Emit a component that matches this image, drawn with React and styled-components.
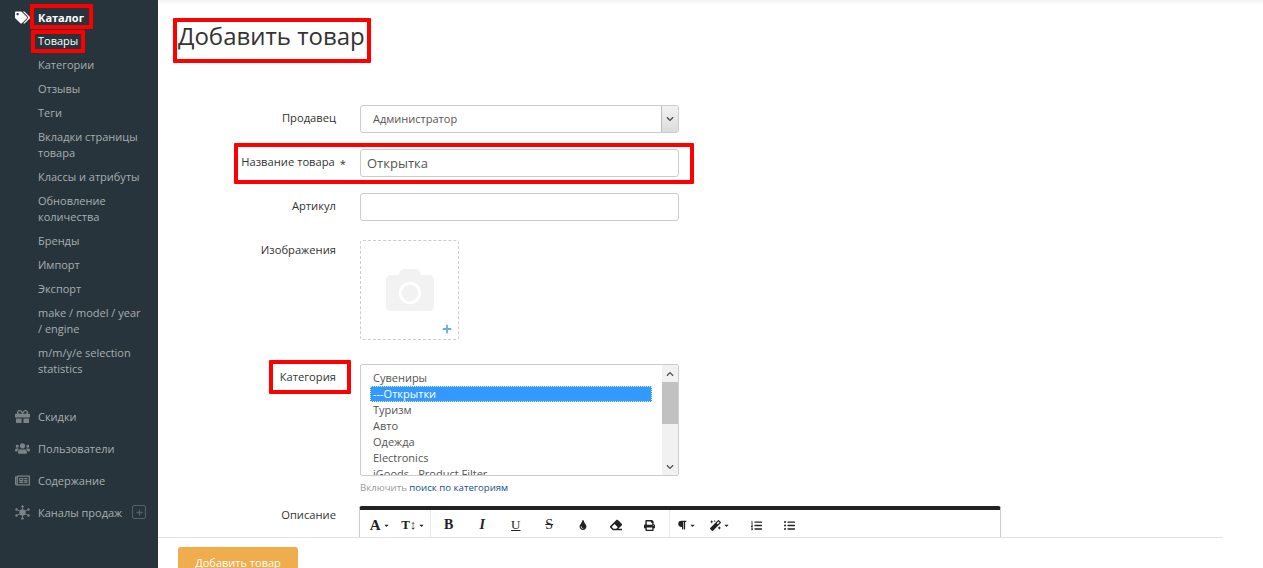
import React from 'react';
import styled, { createGlobalStyle } from 'styled-components';
import {
  FaTags,
  FaGift,
  FaUsers,
  FaRegNewspaper,
  FaCamera,
  FaPlus,
  FaChevronDown,
  FaChevronUp,
  FaCaretDown,
  FaTint,
  FaEraser,
  FaPrint,
  FaParagraph,
  FaMagic,
  FaListOl,
  FaListUl,
} from 'react-icons/fa';

const GlobalStyle = createGlobalStyle`
  html, body {
    margin: 0;
    height: 100%;
    overflow: hidden;
    background: #fff;
    font-family: "Open Sans", "Noto Sans", sans-serif;
  }
  #root {
    height: 100%;
  }
`;

const Page = styled.div`
  display: flex;
  height: 100vh;
`;

const Sidebar = styled.nav`
  width: 158px;
  flex-shrink: 0;
  background: #27343b;
  padding-top: 5px;
  box-sizing: border-box;
  overflow: hidden;
`;

const Framed = styled.div`
  position: relative;
`;

const RedFrame = styled.span`
  position: absolute;
  top: ${(p) => p.$top}px;
  left: ${(p) => p.$left}px;
  width: ${(p) => p.$width}px;
  height: ${(p) => p.$height}px;
  box-sizing: border-box;
  border: 4px solid #f00;
  border-radius: 1px;
  pointer-events: none;
`;

const SectionRow = styled.div`
  display: flex;
  align-items: center;
  height: 24px;
  padding-left: 15px;
  font-size: 11px;
  font-weight: 700;
  color: #fff;
`;

const SectionIcon = styled.span`
  width: 23px;
  display: flex;
  align-items: center;
  font-size: 15px;
  color: ${(p) => p.$color || '#7b8388'};
`;

const SubList = styled.ul`
  list-style: none;
  margin: 0;
  padding: 0 0 19px;
`;

const SubItem = styled.li`
  padding: 4px 15px 4px 38px;
  font-size: 11px;
  line-height: 16px;
  color: ${(p) => (p.$active ? '#fff' : '#a7aeb2')};
`;

const NavRow = styled.div`
  display: flex;
  align-items: center;
  height: 32px;
  padding-left: 15px;
  font-size: 11px;
  color: #a7aeb2;
`;

const PlusBox = styled.span`
  display: flex;
  align-items: center;
  justify-content: center;
  width: 12px;
  height: 12px;
  margin-left: 10px;
  border: 1px solid #566167;
  border-radius: 2px;
  color: #566167;
  font-size: 7px;
`;

const Main = styled.main`
  flex: 1;
  min-width: 0;
  display: flex;
  flex-direction: column;
  height: 100vh;
`;

const Scroll = styled.div`
  flex: 1;
  min-height: 0;
  overflow: hidden;
  background: linear-gradient(#f3f3f3, #fff 5px);
  padding: 18px 0 0 15px;
`;

const TitleBox = styled.div`
  display: inline-block;
  box-sizing: border-box;
  height: 45px;
  border: 4px solid #f00;
  border-radius: 1px;
  padding: 0 2px 0 1px;
`;

const Title = styled.h1`
  margin: 0;
  font-size: 24px;
  font-weight: 400;
  line-height: 28px;
  color: #333;
`;

const Form = styled.form`
  margin-top: 42px;
  margin-left: -15px;
`;

const Row = styled.div`
  position: relative;
  display: flex;
  margin-bottom: ${(p) => p.$gap ?? 16}px;
`;

const Label = styled.label`
  width: 178px;
  margin-right: 24px;
  padding-top: ${(p) => p.$top ?? 5}px;
  box-sizing: border-box;
  text-align: right;
  font-size: 11.2px;
  line-height: 16px;
  color: #333;
  flex-shrink: 0;
`;

const Required = styled.span`
  margin-right: -10px;
  margin-left: 5px;
  vertical-align: -2px;
`;

const Field = styled.div`
  width: 319px;
  height: 28px;
  box-sizing: border-box;
  border: 1px solid #ccc;
  border-radius: 3px;
  background: #fff;
  display: flex;
  align-items: center;
  color: #555;
`;

const InputText = styled.span`
  padding-left: 6px;
  font-size: 13px;
`;

const SelectText = styled.span`
  flex: 1;
  padding: 0 0 1px 12px;
  font-size: 11px;
`;

const SelectArrow = styled.span`
  width: 17px;
  height: 100%;
  box-sizing: border-box;
  display: flex;
  align-items: center;
  justify-content: center;
  background: linear-gradient(#f2f2f2, #dcdcdc);
  border-left: 1px solid #bbb;
  border-radius: 0 2px 2px 0;
  color: #444;
  font-size: 8px;
`;

const Dropzone = styled.div`
  position: relative;
  width: 99px;
  height: 100px;
  box-sizing: border-box;
  border: 1px dashed #ccc;
  border-radius: 3px;
  display: flex;
  align-items: center;
  justify-content: center;
  color: #f2f2f2;
  font-size: 48px;
`;

const DropPlus = styled.span`
  position: absolute;
  right: 6px;
  bottom: 5px;
  display: flex;
  font-size: 10px;
  color: #6db1d1;
`;

const ListBox = styled.div`
  width: 319px;
  height: 112px;
  box-sizing: border-box;
  border: 1px solid #ccc;
  border-radius: 2px;
  display: flex;
  overflow: hidden;
`;

const Options = styled.div`
  flex: 1;
  min-width: 0;
  padding: 5px 10px 0 9px;
  overflow: hidden;
`;

const Option = styled.div`
  height: 16px;
  line-height: 16px;
  padding-left: 3px;
  font-size: 11px;
  white-space: nowrap;
  color: ${(p) => (p.$selected ? '#fff' : '#555')};
  background: ${(p) => (p.$selected ? '#3399ff' : 'transparent')};
  outline: ${(p) => (p.$selected ? '1px dotted #dceaf8' : 'none')};
  outline-offset: -1px;
`;

const ScrollTrack = styled.div`
  width: 16px;
  background: #f1f1f1;
  display: flex;
  flex-direction: column;
  align-items: center;
  color: #505050;
  font-size: 8px;
`;

const ScrollArrow = styled.span`
  height: 17px;
  display: flex;
  align-items: center;
  justify-content: center;
  flex-shrink: 0;
`;

const ScrollThumb = styled.span`
  width: 100%;
  height: 42px;
  background: #c1c1c1;
  flex-shrink: 0;
`;

const ScrollRest = styled.span`
  flex: 1;
`;

const Help = styled.div`
  margin-top: 4px;
  font-size: 9.65px;
  line-height: 15px;
  color: #999;
`;

const HelpLink = styled.a`
  color: #14508c;
`;

const Editor = styled.div`
  width: 642px;
  margin-left: -1px;
  box-sizing: border-box;
  border: 1px solid #ccc;
  border-top: 4px solid #222;
  border-radius: 3px 3px 0 0;
`;

const Toolbar = styled.div`
  display: flex;
  height: 30px;
  padding-left: 3px;
  color: #222;
`;

const ToolGroup = styled.div`
  display: flex;
  align-items: center;
  height: 30px;
  padding: 0 ${(p) => p.$padRight ?? 0}px 0 ${(p) => p.$padLeft ?? 0}px;
  border-right: ${(p) => (p.$last ? 'none' : '1px solid #e8e8e8')};
`;

const Tool = styled.span`
  width: 33.5px;
  margin-left: ${(p) => p.$shift ?? 0}px;
  display: flex;
  align-items: center;
  justify-content: center;
  font-family: "Liberation Serif", serif;
  font-size: ${(p) => p.$size || 13}px;
  font-weight: ${(p) => (p.$light ? 400 : 700)};
  font-style: ${(p) => (p.$italic ? 'italic' : 'normal')};
  text-decoration: ${(p) => p.$line || 'none'};
`;

const Caret = styled.span`
  display: flex;
  margin-left: 2px;
  font-size: 7px;
`;

const Footer = styled.footer`
  height: 31px;
  flex-shrink: 0;
  box-sizing: border-box;
  margin-right: 40px;
  border-top: 1px solid #e2e2e2;
  padding: 9px 0 0 20px;
  overflow: hidden;
`;

const SaveButton = styled.button`
  width: 120px;
  height: 32px;
  border: 0;
  border-radius: 3px;
  background: #f0ad4e;
  color: #fff;
  font-family: inherit;
  font-size: 11px;
  padding: 0 0 2px;
`;

const ChannelIcon = () => (
  <svg width="15" height="15" viewBox="0 0 15 15" fill="currentColor" stroke="currentColor">
    <circle cx="7.5" cy="7.5" r="3.2" stroke="none" />
    <path d="M7.5 1.5v12M1.5 4.5l12 6M1.5 10.5l12-6" strokeWidth="0.8" />
    <circle cx="7.5" cy="1.5" r="1.2" stroke="none" />
    <circle cx="7.5" cy="13.5" r="1.2" stroke="none" />
    <circle cx="1.5" cy="4.5" r="1.2" stroke="none" />
    <circle cx="13.5" cy="4.5" r="1.2" stroke="none" />
    <circle cx="1.5" cy="10.5" r="1.2" stroke="none" />
    <circle cx="13.5" cy="10.5" r="1.2" stroke="none" />
  </svg>
);

const subItems = [
  'Категории',
  'Отзывы',
  'Теги',
  'Вкладки страницы товара',
  'Классы и атрибуты',
  'Обновление количества',
  'Бренды',
  'Импорт',
  'Экспорт',
  'make / model / year / engine',
  'm/m/y/e selection statistics',
];

const categories = ['Сувениры', '---Открытки', 'Туризм', 'Авто', 'Одежда', 'Electronics', 'iGoods - Product Filter'];

const App = () => {
  return (
    <Page>
      <GlobalStyle />
      <Sidebar>
        <Framed>
          <RedFrame $top={-1} $left={30} $width={63} $height={25} />
          <SectionRow>
            <SectionIcon $color="#fff"><FaTags /></SectionIcon>
            Каталог
          </SectionRow>
        </Framed>
        <SubList>
          <Framed>
            <RedFrame $top={1} $left={31} $width={54} $height={23} />
            <SubItem $active>Товары</SubItem>
          </Framed>
          {subItems.map((item) => (
            <SubItem key={item}>{item}</SubItem>
          ))}
        </SubList>
        <NavRow><SectionIcon><FaGift /></SectionIcon>Скидки</NavRow>
        <NavRow><SectionIcon><FaUsers /></SectionIcon>Пользователи</NavRow>
        <NavRow><SectionIcon><FaRegNewspaper /></SectionIcon>Содержание</NavRow>
        <NavRow>
          <SectionIcon><ChannelIcon /></SectionIcon>
          Каналы продаж
          <PlusBox><FaPlus /></PlusBox>
        </NavRow>
      </Sidebar>
      <Main>
        <Scroll>
          <TitleBox>
            <Title>Добавить товар</Title>
          </TitleBox>
          <Form>
            <Row>
              <Label>Продавец</Label>
              <Field>
                <SelectText>Администратор</SelectText>
                <SelectArrow><FaChevronDown /></SelectArrow>
              </Field>
            </Row>
            <Row>
              <RedFrame $top={-6} $left={76} $width={460} $height={41} />
              <Label>Название товара<Required>*</Required></Label>
              <Field><InputText>Открытка</InputText></Field>
            </Row>
            <Row $gap={19}>
              <Label>Артикул</Label>
              <Field />
            </Row>
            <Row $gap={24}>
              <Label $top={2}>Изображения</Label>
              <Dropzone>
                <FaCamera />
                <DropPlus><FaPlus /></DropPlus>
              </Dropzone>
            </Row>
            <Row $gap={11}>
              <RedFrame $top={-4} $left={111} $width={82} $height={34} />
              <Label>Категория</Label>
              <div>
                <ListBox>
                  <Options>
                    {categories.map((c, i) => (
                      <Option key={c} $selected={i === 1}>{c}</Option>
                    ))}
                  </Options>
                  <ScrollTrack>
                    <ScrollArrow><FaChevronUp /></ScrollArrow>
                    <ScrollThumb />
                    <ScrollRest />
                    <ScrollArrow><FaChevronDown /></ScrollArrow>
                  </ScrollTrack>
                </ListBox>
                <Help>Включить <HelpLink>поиск по категориям</HelpLink></Help>
              </div>
            </Row>
            <Row>
              <Label $top={1}>Описание</Label>
              <Editor>
                <Toolbar>
                  <ToolGroup>
                    <Tool $size={15}>A<Caret><FaCaretDown /></Caret></Tool>
                    <Tool $size={13}>T↕<Caret><FaCaretDown /></Caret></Tool>
                  </ToolGroup>
                  <ToolGroup $padLeft={1} $padRight={2}>
                    <Tool $size={14}>B</Tool>
                    <Tool $size={14} $italic>I</Tool>
                    <Tool $size={13} $light $line="underline">U</Tool>
                    <Tool $size={14} $light $line="line-through">S</Tool>
                    <Tool $size={10}><FaTint /></Tool>
                    <Tool $size={12}><FaEraser /></Tool>
                    <Tool $size={11}><FaPrint /></Tool>
                  </ToolGroup>
                  <ToolGroup $last>
                    <Tool $size={10}><FaParagraph /><Caret><FaCaretDown /></Caret></Tool>
                    <Tool $size={11}><FaMagic /><Caret><FaCaretDown /></Caret></Tool>
                    <Tool $size={11} $shift={3}><FaListOl /></Tool>
                    <Tool $size={11}><FaListUl /></Tool>
                  </ToolGroup>
                </Toolbar>
              </Editor>
            </Row>
          </Form>
        </Scroll>
        <Footer>
          <SaveButton>Добавить товар</SaveButton>
        </Footer>
      </Main>
    </Page>
  );
};

export default App;
